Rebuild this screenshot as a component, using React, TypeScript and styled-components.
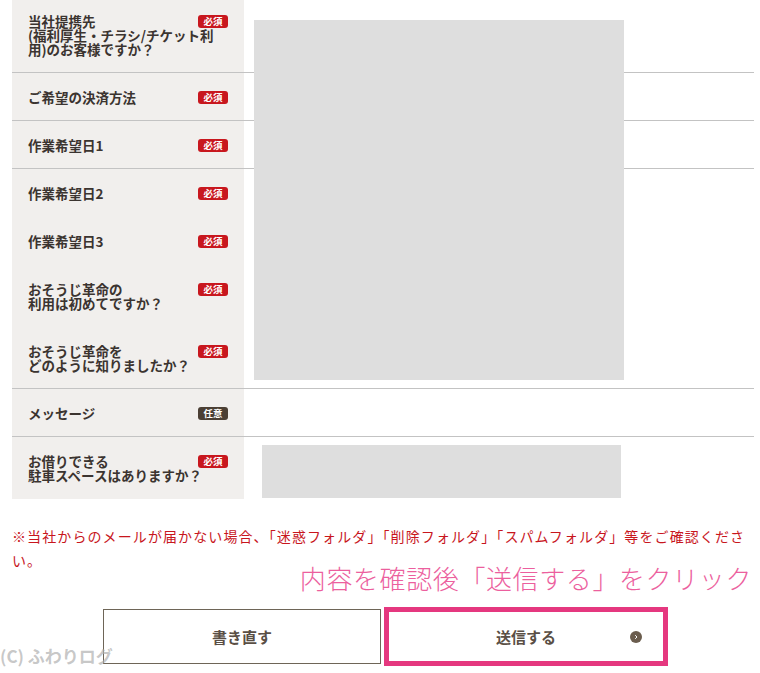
import styled, { createGlobalStyle } from "styled-components";

const GlobalStyle = createGlobalStyle`
  html, body {
    margin: 0;
    padding: 0;
    background: #ffffff;
    overflow: hidden;
  }
  body {
    font-family: "Noto Sans CJK JP", "Noto Sans", sans-serif;
  }
`;

const Page = styled.div`
  position: relative;
  width: 760px;
  height: 673px;
  padding: 0 6px 0 12px;
  box-sizing: border-box;
`;

const FormTable = styled.div`
  position: relative;
  margin-top: -3px;
`;

const Row = styled.div`
  display: grid;
  grid-template-columns: 232px 1fr;
`;

const LabelCell = styled.div<{ $divided?: boolean }>`
  padding: 17px 16px 16px 16px;
  background: #f1efed;
  border-bottom: 1px solid ${(p) => (p.$divided ? "#c3c3c3" : "#f1efed")};
`;

const LabelText = styled.div`
  font-size: 13.5px;
  font-weight: 700;
  line-height: 14px;
  color: #3b3430;
  white-space: pre;
`;

const Badge = styled.span<{ $optional?: boolean }>`
  float: right;
  width: 30px;
  height: 13px;
  border-radius: 3px;
  background: ${(p) => (p.$optional ? "#4b3f34" : "#c8171e")};
  color: #ffffff;
  font-size: 9.5px;
  font-weight: 700;
  line-height: 13px;
  text-align: center;
  margin-top: 1px;
`;

const ValueCell = styled.div<{ $divided?: boolean; $inset?: boolean }>`
  padding: ${(p) => (p.$inset ? "8px 0 0 18px" : "0")};
  border-bottom: 1px solid ${(p) => (p.$divided ? "#c3c3c3" : "transparent")};
`;

const Redaction = styled.div`
  width: 359px;
  height: 53px;
  background: #dedede;
`;

const RedactionOverlay = styled.div`
  position: absolute;
  left: 242px;
  top: 23px;
  width: 370px;
  height: 360px;
  background: #dedede;
`;

const Note = styled.p`
  margin: 25px 0 0;
  font-size: 14px;
  letter-spacing: 1.1px;
  line-height: 24px;
  color: #c8161d;
`;

const Hint = styled.p`
  margin: -7px 2px 0 0;
  text-align: right;
  font-size: 26px;
  font-weight: 300;
  letter-spacing: 0.6px;
  line-height: 26px;
  color: #ec5f9e;
`;

const Actions = styled.div`
  display: flex;
  align-items: center;
  justify-content: center;
  gap: 3px;
  margin-top: 16px;
  padding-left: 5px;
`;

const ActionButton = styled.button`
  position: relative;
  display: flex;
  align-items: center;
  justify-content: center;
  width: 278px;
  height: 55px;
  border: 1px solid #6e6557;
  background: #ffffff;
  font-family: inherit;
  font-size: 15px;
  font-weight: 700;
  color: #5a4f45;
  cursor: pointer;
`;

const Highlight = styled.div`
  border: 5px solid #e5387f;
`;

const SubmitButton = styled(ActionButton)`
  width: 274px;
  height: 49px;
  border: none;
`;

const Arrow = styled.span`
  position: absolute;
  right: 21px;
  top: 50%;
  display: flex;
  width: 12px;
  height: 12px;
  margin-top: -6px;
`;

const Watermark = styled.div`
  position: absolute;
  left: 0;
  bottom: 2px;
  font-size: 17px;
  font-weight: 700;
  color: rgba(175, 175, 175, 0.7);
  font-family: "Noto Sans CJK JP", sans-serif;
`;

type Field = {
  label: string;
  optional?: boolean;
  divided?: boolean;
};

const fields: Field[] = [
  { label: "当社提携先\n(福利厚生・チラシ/チケット利\n用)のお客様ですか？", divided: true },
  { label: "ご希望の決済方法", divided: true },
  { label: "作業希望日1", divided: true },
  { label: "作業希望日2" },
  { label: "作業希望日3" },
  { label: "おそうじ革命の\n利用は初めてですか？" },
  { label: "おそうじ革命を\nどのように知りましたか？", divided: true },
  { label: "メッセージ", optional: true, divided: true },
];

const App = () => {
  return (
    <>
      <GlobalStyle />
      <Page>
        <FormTable>
          {fields.map((f) => (
            <Row key={f.label}>
              <LabelCell $divided={f.divided}>
                <Badge $optional={f.optional}>{f.optional ? "任意" : "必須"}</Badge>
                <LabelText>{f.label}</LabelText>
              </LabelCell>
              <ValueCell $divided={f.divided} />
            </Row>
          ))}
          <Row>
            <LabelCell>
              <Badge>必須</Badge>
              <LabelText>{"お借りできる\n駐車スペースはありますか？"}</LabelText>
            </LabelCell>
            <ValueCell $inset>
              <Redaction />
            </ValueCell>
          </Row>
          <RedactionOverlay />
        </FormTable>

        <Note>
          ※当社からのメールが届かない場合、「迷惑フォルダ」「削除フォルダ」「スパムフォルダ」等をご確認ください。
        </Note>
        <Hint>内容を確認後「送信する」をクリック</Hint>

        <Actions>
          <ActionButton type="button">書き直す</ActionButton>
          <Highlight>
            <SubmitButton type="submit">
              送信する
              <Arrow>
                <svg width="12" height="12" viewBox="0 0 12 12">
                  <circle cx="6" cy="6" r="6" fill="#6b5d4e" />
                  <path d="M5.2 4.2 L7 6 L5.2 7.8" stroke="#fff" strokeWidth="1" fill="none" />
                </svg>
              </Arrow>
            </SubmitButton>
          </Highlight>
        </Actions>
        <Watermark>(C) ふわりログ</Watermark>
      </Page>
    </>
  );
};

export default App;
